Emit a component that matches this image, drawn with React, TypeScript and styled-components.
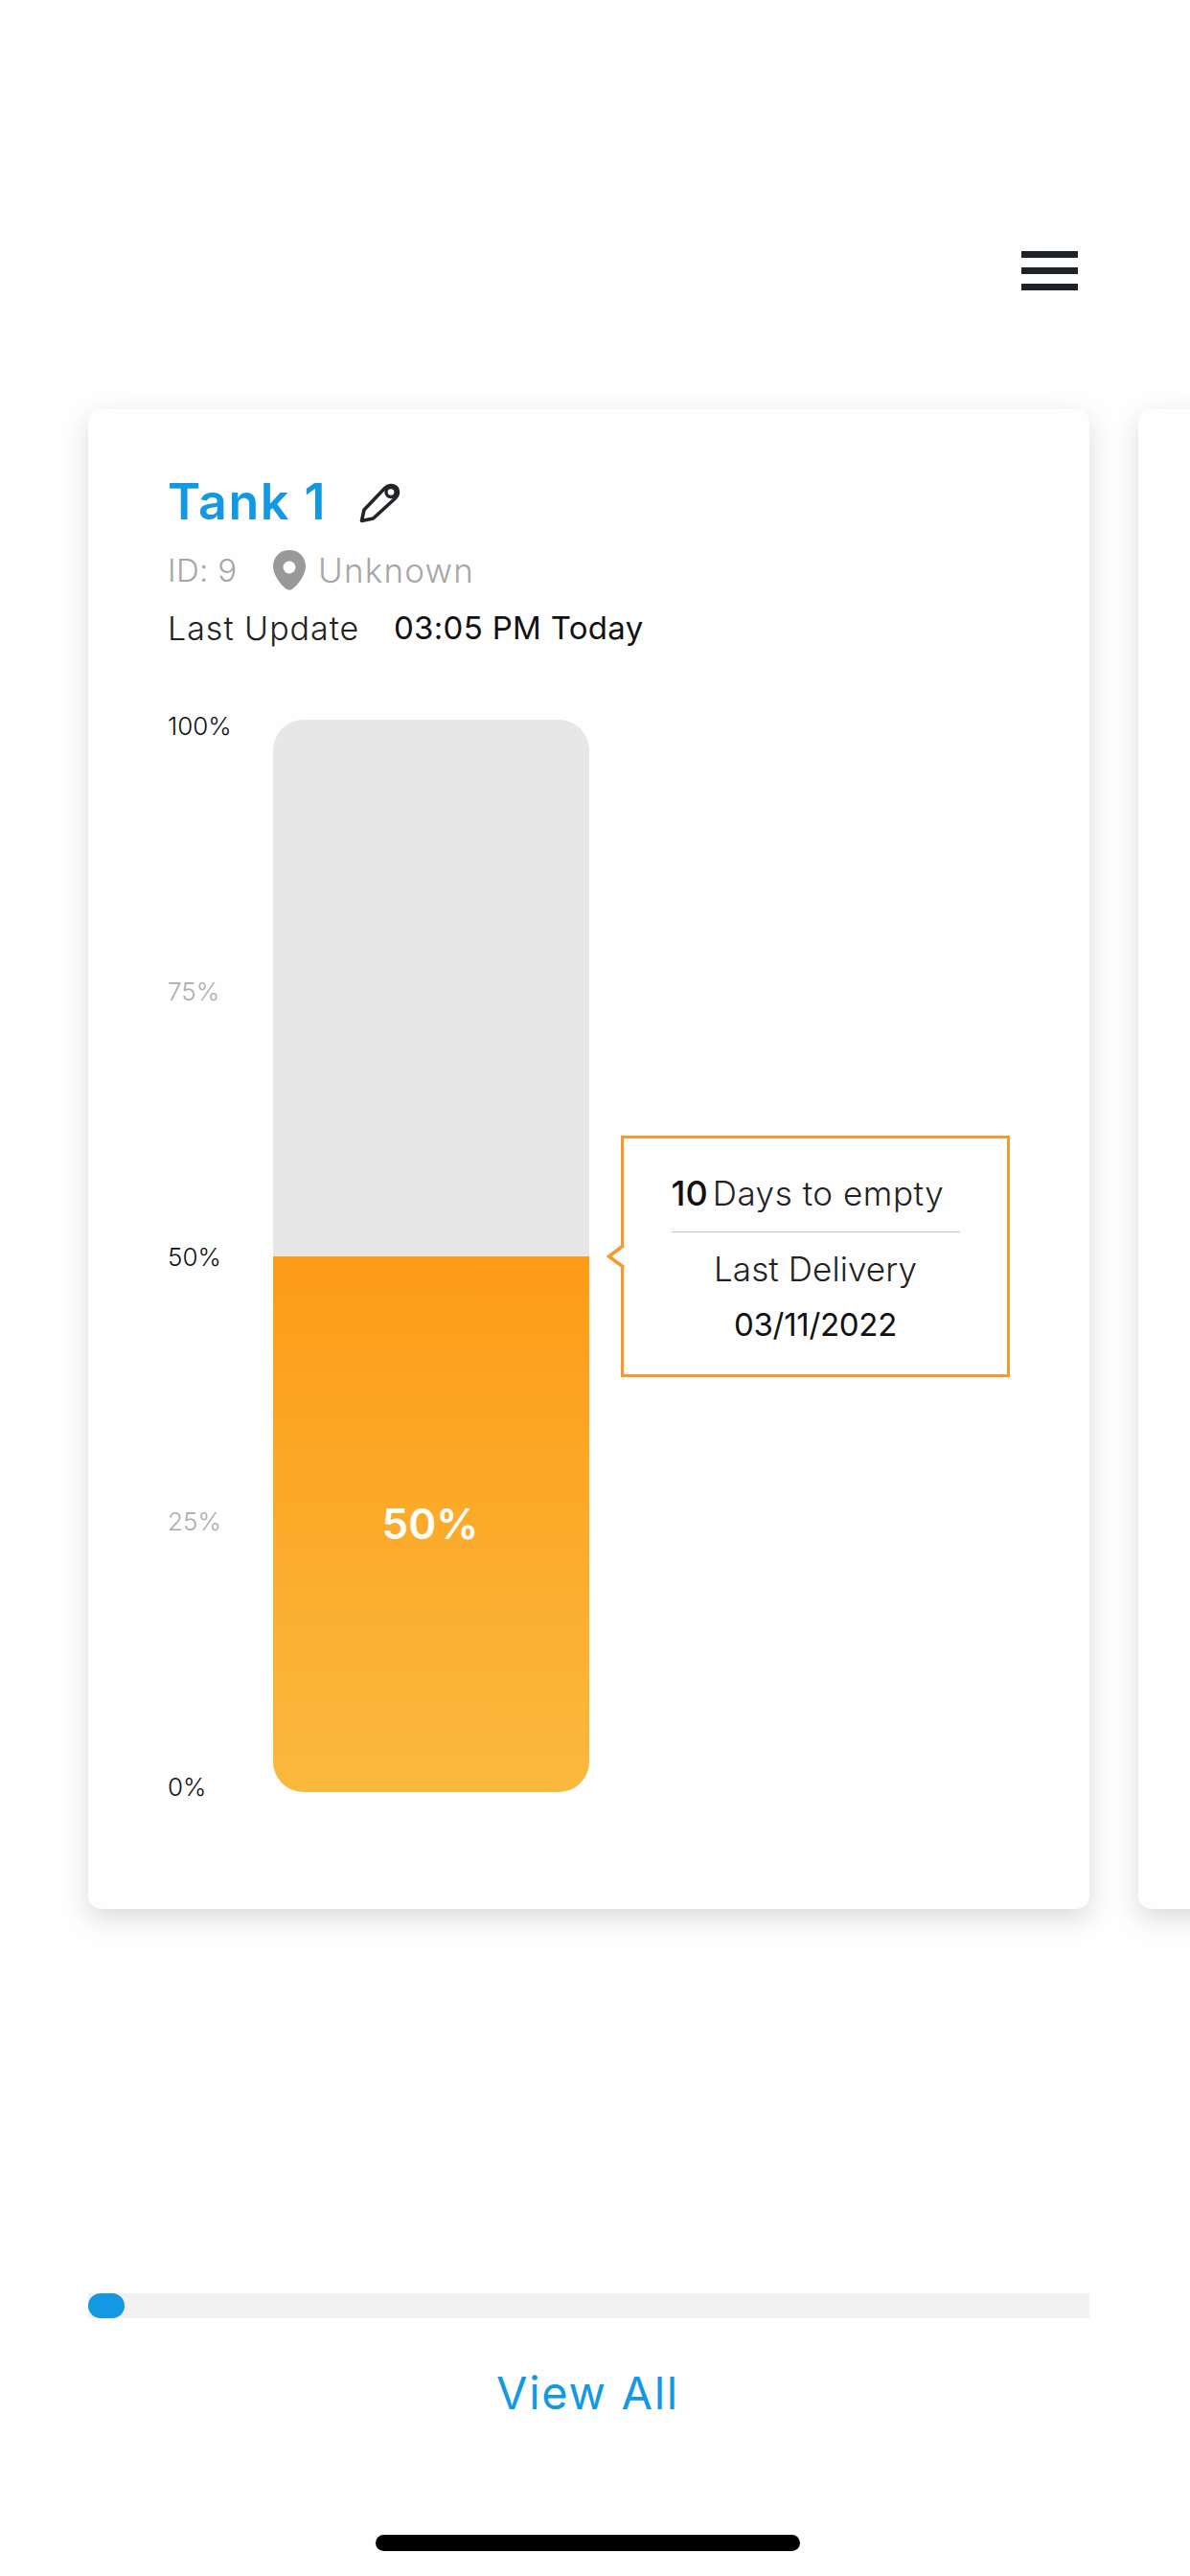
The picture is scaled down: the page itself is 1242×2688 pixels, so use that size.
import React from "react";
import styled, { createGlobalStyle } from "styled-components";

const BLUE = "#1399e4";
const ORANGE = "#f9982a";

const AXIS = [
  { label: "100%", muted: false },
  { label: "75%", muted: true },
  { label: "50%", muted: false },
  { label: "25%", muted: true },
  { label: "0%", muted: false },
];

const PencilIcon = () => (
  <svg width="44" height="44" viewBox="0 0 44 44" fill="none">
    <path
      d="M2.500 41.500 L5 30 L26.500 7.500 C30 4 35.500 3.500 38.500 6.500 C41.500 9.500 41 15 37.500 18 L14.500 39 Z"
      stroke="#222428"
      strokeWidth="3.600"
      strokeLinejoin="round"
    />
    <circle cx="33" cy="11.500" r="5" fill="#fefefe" stroke="#222428" strokeWidth="3.400" />
  </svg>
);

const PinIcon = () => (
  <svg width="36" height="44" viewBox="0 0 36 44">
    <path
      d="M18 1 C28 1 35 8.500 35 18 C35 27 27 37 21.500 41.500 C19.500 43 16.500 43 14.500 41.500 C9 37 1 27 1 18 C1 8.500 8 1 18 1 Z"
      fill="#999999"
    />
    <circle cx="18" cy="19" r="6.500" fill="#ffffff" />
  </svg>
);

export default function App() {
  return (
    <Page>
      <GlobalStyle />
      <TopBar>
        <MenuButton aria-label="Menu">
          <span />
          <span />
          <span />
        </MenuButton>
      </TopBar>

      <Carousel>
        <Card>
          <TitleRow>
            <Title>Tank 1</Title>
            <PencilIcon />
          </TitleRow>
          <MetaRow>
            <MetaId>ID: 9</MetaId>
            <PinIcon />
            <MetaPlace>Unknown</MetaPlace>
          </MetaRow>
          <UpdateRow>
            <UpdateLabel>Last Update</UpdateLabel>
            <UpdateTime>03:05 PM Today</UpdateTime>
          </UpdateRow>

          <GaugeRow>
            <Axis>
              {AXIS.map((tick) => (
                <AxisLabel key={tick.label} $muted={tick.muted}>
                  {tick.label}
                </AxisLabel>
              ))}
            </Axis>
            <Tank>
              <TankFill $level={50}>50%</TankFill>
            </Tank>
            <Callout>
              <CalloutArrow viewBox="0 0 21 28">
                <path d="M18 2.500 L2.500 14 L18 25.500" />
              </CalloutArrow>
              <DaysRow>
                <DaysValue>10</DaysValue>
                <DaysText>Days to empty</DaysText>
              </DaysRow>
              <Divider />
              <DeliveryLabel>Last Delivery</DeliveryLabel>
              <DeliveryDate>03/11/2022</DeliveryDate>
            </Callout>
          </GaugeRow>
        </Card>
        <Card />
      </Carousel>

      <ScrollTrack>
        <ScrollThumb />
      </ScrollTrack>
      <ViewAll>View All</ViewAll>
      <HomeIndicator />
    </Page>
  );
}

/* ===================== styles ===================== */
const GlobalStyle = createGlobalStyle`
  html, body {
    margin: 0;
    padding: 0;
    background: #fefefe;
  }
  * {
    box-sizing: border-box;
  }
`;

const Page = styled.div`
  width: 1242px;
  height: 2688px;
  overflow: hidden;
  background: #fefefe;
  font-family: Inter, "Liberation Sans", sans-serif;
  display: flex;
  flex-direction: column;
`;

const TopBar = styled.header`
  height: 427px;
  padding: 262px 117px 0 0;
  display: flex;
  justify-content: flex-end;
  align-items: flex-start;
`;

const MenuButton = styled.div`
  width: 59px;
  display: flex;
  flex-direction: column;
  gap: 10px;

  span {
    display: block;
    height: 7px;
    background: #1f2226;
  }
`;

const Carousel = styled.section`
  display: flex;
  gap: 51px;
  padding-left: 92px;
`;

const Card = styled.article`
  flex: 0 0 1045px;
  height: 1565px;
  padding: 67px 0 0 83px;
  background: #fefefe;
  border-radius: 14px;
  box-shadow: 0 10px 28px rgba(0, 0, 0, 0.14);
`;

const TitleRow = styled.div`
  display: flex;
  align-items: center;
  gap: 34px;
  height: 60px;
`;

const Title = styled.h1`
  margin: 0;
  font-size: 52px;
  font-weight: 600;
  line-height: 60px;
  letter-spacing: 1.5px;
  color: ${BLUE};
`;

const MetaRow = styled.div`
  display: flex;
  align-items: center;
  height: 44px;
  margin-top: 19px;
  font-weight: 300;
  color: #a6a6a6;
`;

const MetaId = styled.span`
  width: 109px;
  font-size: 33px;
  letter-spacing: 0.3px;
`;

const MetaPlace = styled.span`
  margin-left: 12px;
  font-size: 35px;
  letter-spacing: 1.2px;
`;

const UpdateRow = styled.div`
  display: flex;
  align-items: center;
  height: 40px;
  margin-top: 18px;
`;

const UpdateLabel = styled.span`
  width: 236px;
  font-size: 34px;
  font-weight: 300;
  letter-spacing: 1px;
  color: #222;
`;

const UpdateTime = styled.span`
  font-size: 33px;
  font-weight: 400;
  letter-spacing: 0.3px;
  color: #111;
`;

const GaugeRow = styled.div`
  display: flex;
  align-items: center;
  height: 1119px;
  margin-top: 76px;
`;

const Axis = styled.div`
  align-self: flex-start;
  flex: 0 0 110px;
  height: 1141px;
  margin-top: -10px;
  display: flex;
  flex-direction: column;
  justify-content: space-between;
`;

const AxisLabel = styled.span<{ $muted: boolean }>`
  height: 34px;
  line-height: 34px;
  font-size: 26px;
  font-weight: 300;
  color: ${({ $muted }) => ($muted ? "#adadad" : "#111")};
`;

const Tank = styled.div`
  flex: 0 0 330px;
  height: 100%;
  display: flex;
  align-items: flex-end;
  background: #e7e7e7;
  border-radius: 32px;
  overflow: hidden;
`;

const TankFill = styled.div<{ $level: number }>`
  width: 100%;
  height: ${({ $level }) => $level}%;
  padding-right: 2px;
  display: flex;
  align-items: center;
  justify-content: center;
  background: linear-gradient(180deg, #fd9c17 0%, #fab93d 100%);
  color: #fff;
  font-size: 44px;
  font-weight: 600;
`;

const Callout = styled.aside`
  position: relative;
  flex: 0 0 406px;
  height: 252px;
  margin-left: 33px;
  padding-top: 34px;
  border: 3px solid ${ORANGE};
  display: flex;
  flex-direction: column;
  align-items: center;
`;

const CalloutArrow = styled.svg`
  position: absolute;
  left: -18px;
  top: 50%;
  width: 21px;
  height: 28px;
  transform: translateY(-50%);

  path {
    fill: #fefefe;
    stroke: ${ORANGE};
    stroke-width: 3.5px;
  }
`;

const DaysRow = styled.div`
  width: 301px;
  display: flex;
  align-items: baseline;
  gap: 5px;
  height: 46px;
  line-height: 46px;
  color: #222;
`;

const DaysValue = styled.span`
  font-size: 36px;
  font-weight: 500;
  color: #111;
`;

const DaysText = styled.span`
  font-size: 35px;
  font-weight: 300;
  letter-spacing: 0.55px;
`;

const Divider = styled.hr`
  width: 301px;
  height: 1px;
  margin: 17px 0 15px;
  border: 0;
  background: #c4c4c4;
`;

const DeliveryLabel = styled.div`
  height: 46px;
  line-height: 46px;
  font-size: 35px;
  font-weight: 300;
  letter-spacing: 0.1px;
  color: #222;
`;

const DeliveryDate = styled.div`
  height: 46px;
  margin-top: 12px;
  line-height: 46px;
  font-size: 33px;
  font-weight: 400;
  letter-spacing: -0.3px;
  color: #111;
`;

const ScrollTrack = styled.div`
  width: 1045px;
  height: 26px;
  margin: 401px 0 0 92px;
  background: #f1f1f1;
`;

const ScrollThumb = styled.div`
  width: 38px;
  height: 100%;
  border-radius: 13px;
  background: ${BLUE};
`;

const ViewAll = styled.a`
  width: 1227px;
  height: 60px;
  margin-top: 48px;
  line-height: 60px;
  text-align: center;
  font-size: 47px;
  font-weight: 400;
  letter-spacing: 1.7px;
  color: ${BLUE};
`;

const HomeIndicator = styled.div`
  width: 443px;
  height: 17px;
  margin: 118px 0 0 392px;
  border-radius: 9px;
  background: #000;
`;
